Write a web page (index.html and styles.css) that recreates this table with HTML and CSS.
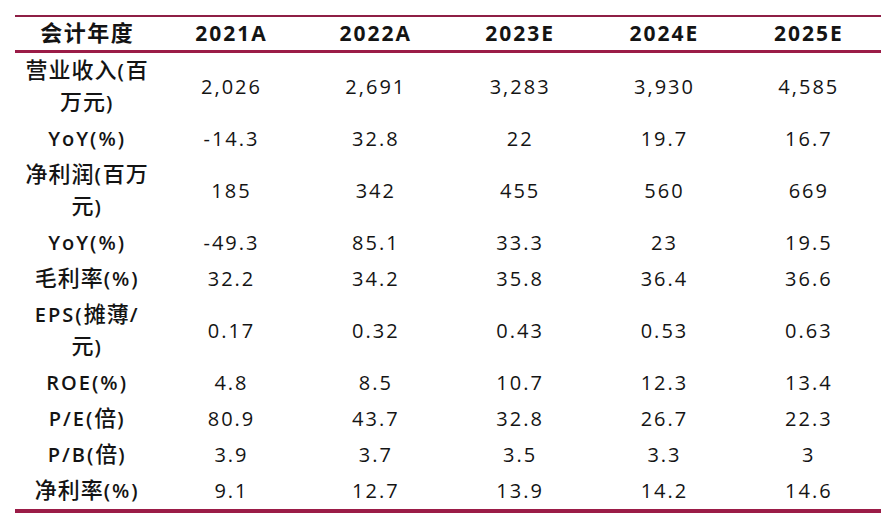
FILE: index.html
```html
<!DOCTYPE html>
<html lang="zh-CN">
<head>
<meta charset="utf-8">
<link rel="stylesheet" href="styles.css">
</head>
<body>
<table class="fin">
  <thead>
    <tr><th><span class="cj">会计年度</span></th><th>2021A</th><th>2022A</th><th>2023E</th><th>2024E</th><th>2025E</th></tr>
  </thead>
  <tbody>
    <tr class="tall"><td class="lbl"><span class="cj">营业收入</span>(<span class="cj">百</span><br><span class="cj">万元</span>)</td><td>2,026</td><td>2,691</td><td>3,283</td><td>3,930</td><td>4,585</td></tr>
    <tr><td class="lbl">YoY(%)</td><td>-14.3</td><td>32.8</td><td>22</td><td>19.7</td><td>16.7</td></tr>
    <tr class="tall"><td class="lbl"><span class="cj">净利润</span>(<span class="cj">百万</span><br><span class="cj">元</span>)</td><td>185</td><td>342</td><td>455</td><td>560</td><td>669</td></tr>
    <tr><td class="lbl">YoY(%)</td><td>-49.3</td><td>85.1</td><td>33.3</td><td>23</td><td>19.5</td></tr>
    <tr><td class="lbl"><span class="cj">毛利率</span>(%)</td><td>32.2</td><td>34.2</td><td>35.8</td><td>36.4</td><td>36.6</td></tr>
    <tr class="tall"><td class="lbl">EPS(<span class="cj">摊薄</span>/<br><span class="cj">元</span>)</td><td>0.17</td><td>0.32</td><td>0.43</td><td>0.53</td><td>0.63</td></tr>
    <tr><td class="lbl">ROE(%)</td><td>4.8</td><td>8.5</td><td>10.7</td><td>12.3</td><td>13.4</td></tr>
    <tr><td class="lbl">P/E(<span class="cj">倍</span>)</td><td>80.9</td><td>43.7</td><td>32.8</td><td>26.7</td><td>22.3</td></tr>
    <tr><td class="lbl">P/B(<span class="cj">倍</span>)</td><td>3.9</td><td>3.7</td><td>3.5</td><td>3.3</td><td>3</td></tr>
    <tr><td class="lbl"><span class="cj">净利率</span>(%)</td><td>9.1</td><td>12.7</td><td>13.9</td><td>14.2</td><td>14.6</td></tr>
  </tbody>
</table>
</body>
</html>
```
FILE: styles.css
```css
html, body {
  margin: 0;
  padding: 0;
  background: #ffffff;
}
body {
  padding: 15px 15px 0 15px;
  font-family: "Open Sans", "Noto Sans CJK SC", sans-serif;
  color: #141414;
}
.fin {
  width: 866px;
  border-collapse: collapse;
  table-layout: fixed;
  border-top: 2px solid #8e1f45;
  border-bottom: 4px solid #9b1c47;
}
.fin th {
  height: 33px;
  padding: 0;
  font-size: 21px;
  font-weight: 700;
  letter-spacing: 2px;
  line-height: 33px;
  text-align: center;
  border-bottom: 3px solid #9b1c47;
}
.fin td {
  height: 36px;
  padding: 0;
  font-size: 20px;
  font-weight: 500;
  letter-spacing: 2px;
  line-height: 32px;
  text-align: center;
}
.fin tr.tall td {
  height: 68px;
}
.fin td.lbl {
  font-weight: 600;
}
.cj {
  font-family: "Noto Sans CJK SC", sans-serif;
  font-size: 22px;
  line-height: 20px;
  letter-spacing: 1px;
  font-weight: 500;
}
.fin th .cj {
  font-weight: 700;
  letter-spacing: 1.5px;
}
```
